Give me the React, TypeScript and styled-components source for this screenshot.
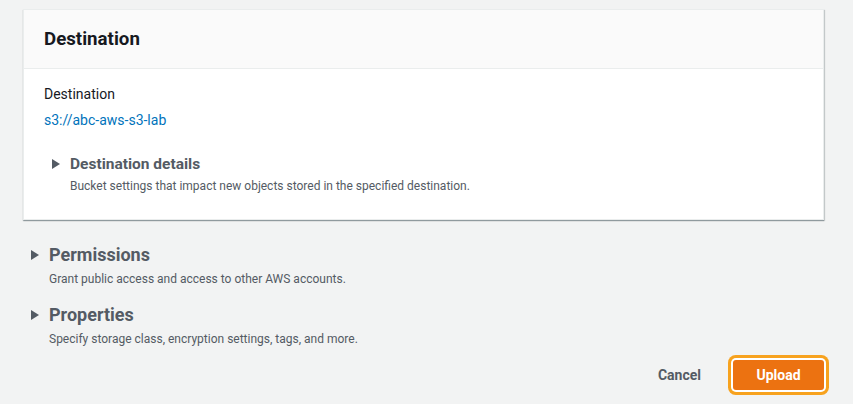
import React from 'react'
import styled, { createGlobalStyle } from 'styled-components'

const GlobalStyle = createGlobalStyle`
	html, body {
		margin: 0;
		padding: 0;
		background: #f2f3f3;
		font-family: Roboto, 'Liberation Sans', Arial, sans-serif;
		color: #16191f;
	}
`

const Page = styled.div`
	width: 853px;
	height: 404px;
	padding: 9px 29px 0 23px;
	box-sizing: border-box;
	display: flex;
	flex-direction: column;
	overflow: hidden;
`

const Card = styled.section`
	background: #ffffff;
	border: 1px solid #eaeded;
	box-shadow: 0 1px 1px 0 rgba(0, 28, 36, 0.3), 1px 1px 1px 0 rgba(0, 28, 36, 0.15);
`

const CardHeader = styled.header`
	background: #fafafa;
	border-bottom: 1px solid #eaeded;
	height: 58px;
	padding: 0 20px;
	display: flex;
	align-items: center;
`

const CardTitle = styled.h2`
	margin: 0;
	font-size: 18.7px;
	font-weight: 700;
	color: #16191f;
`

const CardBody = styled.div`
	padding: 15px 20px 25px 20px;
	display: flex;
	flex-direction: column;
`

const Label = styled.div`
	font-size: 14px;
	line-height: 20px;
	color: #16191f;
`

const Link = styled.a`
	font-size: 14px;
	line-height: 22px;
	color: #0073bb;
	text-decoration: none;
	margin-top: 5px;
`

const Expander = styled.div<{ $inset?: boolean }>`
	display: grid;
	grid-template-columns: 16px auto;
	column-gap: 10px;
	align-items: center;
	margin-top: ${p => (p.$inset ? 23 : 0)}px;
`

const Caret = styled.span`
	width: 0;
	height: 0;
	border-top: 5px solid transparent;
	border-bottom: 5px solid transparent;
	border-left: 8px solid #545b64;
	justify-self: end;
`

const ExpTitle = styled.div<{ $big?: boolean }>`
	font-size: ${p => (p.$big ? 18 : 15.5)}px;
	font-weight: 700;
	color: #545b64;
	line-height: ${p => (p.$big ? 24 : 20)}px;
`

const ExpDesc = styled.div`
	grid-column: 2;
	font-size: 12px;
	line-height: 16px;
	color: #545b64;
	margin-top: 4px;
`

const Sections = styled.div`
	display: flex;
	flex-direction: column;
	gap: 16px;
	margin-top: 23px;
`

const Footer = styled.div`
	display: flex;
	justify-content: flex-end;
	align-items: center;
	gap: 30px;
	margin-top: 13px;
`

const CancelButton = styled.button`
	background: none;
	border: none;
	font-family: inherit;
	font-size: 14px;
	font-weight: 700;
	color: #545b64;
	padding: 4px 2px;
	cursor: pointer;
`

const PrimaryButton = styled.button`
	background: #ec7211;
	border: none;
	border-radius: 3px;
	color: #ffffff;
	font-family: inherit;
	font-size: 14px;
	font-weight: 700;
	width: 91px;
	height: 30px;
	box-shadow: 0 0 0 2px #ffffff, 0 0 0 5px #f7a21e;
	outline: none;
	cursor: pointer;
`

function ExpandSection({
	title,
	description,
	big,
	inset,
}: {
	title: string
	description: string
	big?: boolean
	inset?: boolean
}) {
	return (
		<Expander $inset={inset}>
			<Caret />
			<ExpTitle $big={big}>{title}</ExpTitle>
			<ExpDesc>{description}</ExpDesc>
		</Expander>
	)
}

export default function App() {
	return (
		<>
			<GlobalStyle />
			<Page>
				<Card>
					<CardHeader>
						<CardTitle>Destination</CardTitle>
					</CardHeader>
					<CardBody>
						<Label>Destination</Label>
						<Link href='#'>s3://abc-aws-s3-lab</Link>
						<ExpandSection
							inset
							title='Destination details'
							description='Bucket settings that impact new objects stored in the specified destination.'
						/>
					</CardBody>
				</Card>
				<Sections>
					<ExpandSection
						big
						title='Permissions'
						description='Grant public access and access to other AWS accounts.'
					/>
					<ExpandSection
						big
						title='Properties'
						description='Specify storage class, encryption settings, tags, and more.'
					/>
				</Sections>
				<Footer>
					<CancelButton>Cancel</CancelButton>
					<PrimaryButton>Upload</PrimaryButton>
				</Footer>
			</Page>
		</>
	)
}
